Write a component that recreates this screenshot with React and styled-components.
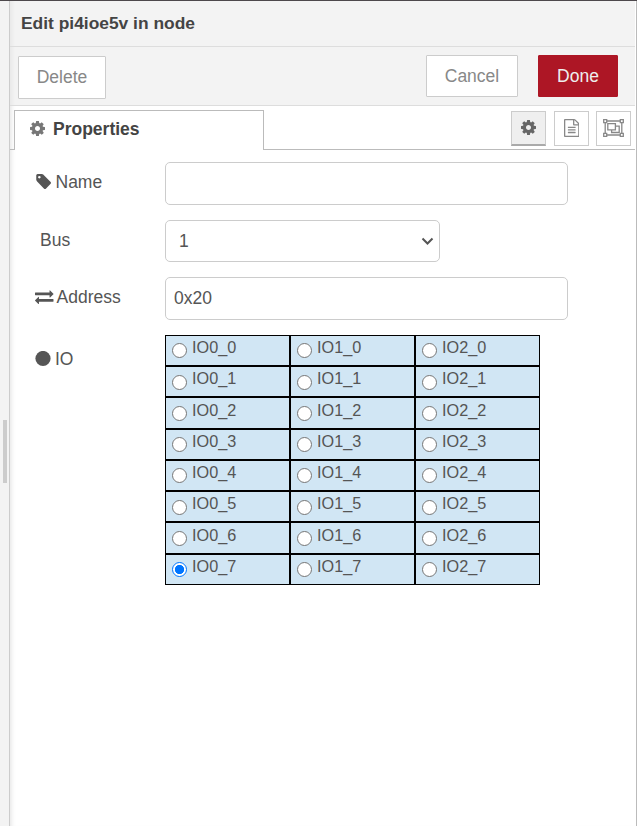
import React, { useState } from "react";
import styled, { createGlobalStyle } from "styled-components";

const GlobalStyle = createGlobalStyle`
  * { box-sizing: border-box; }
  body {
    margin: 0;
    background: #fff;
    color: #555;
    font-family: "Liberation Sans", Arial, sans-serif;
    font-size: 17.5px;
    overflow: hidden;
  }
`;

const Page = styled.div`
  display: flex;
  width: 637px;
  height: 826px;
  border-top: 1px solid #4d484c;
`;

const Gutter = styled.div`
  flex: 0 0 9px;
  padding: 419px 0 0 3px;
  background: #f3f3f3;
`;

const Grip = styled.div`
  width: 4px;
  height: 63px;
  background: #ccc;
`;

const Tray = styled.section`
  flex: 1;
  display: flex;
  flex-direction: column;
  border-left: 1px solid #ccc;
  border-right: 1px solid #bbb;
  padding-right: 1px;
  background: #fff;
  box-shadow: inset 5px 0 5px -4px rgba(0, 0, 0, 0.12);
`;

const Header = styled.header`
  height: 46px;
  padding: 0 11px;
  line-height: 45px;
  font-weight: bold;
  font-size: 17.4px;
  color: #444;
  background: linear-gradient(90deg, #e9e9e9, #f3f3f3 5px);
  border-bottom: 1px solid #ddd;
`;

const Toolbar = styled.div`
  display: flex;
  align-items: flex-start;
  height: 59px;
  padding: 8px 17px 0 8px;
  background: linear-gradient(90deg, #e9e9e9, #f3f3f3 5px);
  border-bottom: 1px solid #ddd;
`;

const Button = styled.button`
  width: ${(p) => p.$width}px;
  height: ${(p) => p.$height || 42}px;
  padding: 0;
  font: inherit;
  line-height: 40px;
  border-radius: 1px;
  color: ${(p) => (p.$primary ? "#eee" : "#888")};
  background: ${(p) => (p.$primary ? "#ad1625" : "#fff")};
  border: 1px solid ${(p) => (p.$primary ? "#ad1625" : "#ccc")};
`;

const DeleteButton = styled(Button)`
  margin: 1px auto 0 0;
  padding-bottom: 2px;
`;

const DoneButton = styled(Button)`
  margin-left: 20px;
`;

const TabBar = styled.div`
  display: flex;
  height: 44px;
  padding: 4px 4px 0 4px;
  background: linear-gradient(#bbb, #bbb) bottom / 100% 1px no-repeat;
`;

const Tab = styled.div`
  display: flex;
  width: 250px;
  height: 40px;
  padding-left: 15px;
  line-height: 36px;
  font-weight: bold;
  color: #444;
  background: #fff;
  border: 1px solid #bbb;
  border-bottom: 0;

  svg {
    margin: 10px 8px 0 0;
    color: #777;
  }
`;

const TabTools = styled.div`
  display: flex;
  gap: 7px;
  margin: 1px 0 0 auto;
`;

const ToolButton = styled.button`
  display: flex;
  align-items: flex-start;
  justify-content: center;
  width: 35px;
  height: 35px;
  padding: ${(p) => (p.$selected ? 8 : 7)}px 0 0;
  margin-right: ${(p) => (p.$selected ? 1 : 0)}px;
  color: ${(p) => (p.$selected ? "#666" : "#888")};
  background: ${(p) => (p.$selected ? "#efefef" : "#fff")};
  border: 1px solid #ccc;
  ${(p) => p.$selected && "border-bottom: 2px solid #aaa;"}
`;

const Form = styled.form`
  display: flex;
  flex-direction: column;
  padding: 12px 0 0 25px;
`;

const Row = styled.div`
  display: flex;
  align-items: flex-start;
  margin-bottom: 15px;
`;

const Label = styled.label`
  display: flex;
  width: 130px;
  padding: ${(p) => p.$top}px 0 0 ${(p) => p.$indent || 0}px;
  line-height: 20px;

  svg {
    flex: none;
    margin-top: 2px;
    margin-right: ${(p) => p.$gap}px;
  }
`;

const TextInput = styled.input`
  width: 403px;
  height: 43px;
  padding: 0 8px;
  font: inherit;
  color: #555;
  background: #fff;
  border: 1px solid #ccc;
  border-radius: 5px;
  outline: 0;
`;

const Select = styled.div`
  display: flex;
  justify-content: space-between;
  width: 275px;
  height: 42px;
  padding: 0 5px 0 13px;
  line-height: 40px;
  color: #555;
  border: 1px solid #ccc;
  border-radius: 5px;

  svg { margin-top: 15px; }
`;

const PinGrid = styled.div`
  display: grid;
  grid-template-columns: repeat(3, 125px);
  grid-template-rows: 31px 31px 32px 31px 31px 31px 32px 31px;
`;

const Pin = styled.label`
  display: flex;
  padding-left: 6px;
  border: 1px solid #000;
  background: #d1e6f4;
  font-size: 16.25px;
  line-height: 20px;
  color: #555;
`;

const Radio = styled.input`
  appearance: none;
  flex: none;
  width: 15px;
  height: 15px;
  margin: ${(p) => p.$top}px 5px 0 0;
  border: 1px solid #767676;
  border-radius: 50%;
  background: #fff;

  &:checked {
    border-color: #0075ff;
    background: radial-gradient(circle, #0075ff 4.3px, #fff 5px);
  }
`;

const PinName = styled.span`
  padding-top: ${(p) => p.$top}px;
`;

const PATHS = {
  cog: "M1152 896q0-106-75-181t-181-75-181 75-75 181 75 181 181 75 181-75 75-181zm512-109v222q0 12-8 23t-20 13l-185 28q-19 54-39 91 35 50 107 138 10 12 10 25t-9 23q-27 37-99 108t-94 71q-12 0-26-9l-138-108q-44 23-91 38-16 136-29 186-7 28-36 28h-222q-14 0-24.5-8.5t-11.5-21.5l-28-184q-49-16-90-37l-141 107q-10 9-25 9-14 0-25-11-126-114-165-168-7-10-7-23 0-12 8-23 15-21 51-66.5t54-70.5q-27-50-41-99l-183-27q-13-2-21-12.5t-8-23.5v-222q0-12 8-23t19-13l186-28q14-46 39-92-40-57-107-138-10-12-10-24 0-10 9-23 26-36 98.5-107.5t94.5-71.5q13 0 26 10l138 107q44-23 91-38 16-136 29-186 7-28 36-28h222q14 0 24.5 8.5t11.5 21.5l28 184q49 16 90 37l142-107q9-9 24-9 13 0 25 10 129 119 165 170 7 8 7 22 0 12-8 23-15 21-51 66.5t-54 70.5q26 50 41 98l183 28q13 2 21 12.5t8 23.5z",
  tag: "M576 448q0-53-37.5-90.5t-90.5-37.5-90.5 37.5-37.5 90.5 37.5 90.5 90.5 37.5 90.5-37.5 37.5-90.5zm1067 576q0 53-37 90l-491 492q-39 37-91 37-53 0-90-37l-715-716q-38-37-64.5-101t-26.5-117v-416q0-52 38-90t90-38h416q53 0 117 26.5t102 64.5l715 714q37 39 37 91z",
  exchange: "M1792 1184v192q0 13-9.5 22.5t-22.5 9.5h-1376v192q0 13-9.5 22.5t-22.5 9.5q-12 0-24-10l-319-320q-9-9-9-22 0-14 9-23l320-320q9-9 23-9 13 0 22.5 9.5t9.5 22.5v192h1376q13 0 22.5 9.5t9.5 22.5zm0-544q0 14-9 23l-320 320q-9 9-23 9-13 0-22.5-9.5t-9.5-22.5v-192h-1376q-13 0-22.5-9.5t-9.5-22.5v-192q0-13 9.5-22.5t22.5-9.5h1376v-192q0-14 9-23t23-9q12 0 24 10l319 319q9 9 9 23z",
  file: "M1596 380q28 28 48 76t20 88v1152q0 40-28 68t-68 28h-1344q-40 0-68-28t-28-68v-1600q0-40 28-68t68-28h896q40 0 88 20t76 48zm-444-244v376h376q-10-29-22-41l-313-313q-12-12-41-22zm384 1528v-1024h-416q-40 0-68-28t-28-68v-416h-768v1536h1280zm-1024-864q0-14 9-23t23-9h704q14 0 23 9t9 23v64q0 14-9 23t-23 9h-704q-14 0-23-9t-9-23v-64zm736 224q14 0 23 9t9 23v64q0 14-9 23t-23 9h-704q-14 0-23-9t-9-23v-64q0-14 9-23t23-9h704zm0 256q14 0 23 9t9 23v64q0 14-9 23t-23 9h-704q-14 0-23-9t-9-23v-64q0-14 9-23t23-9h704z",
};

const Icon = ({ name, width, height, viewBox }) => (
  <svg width={width} height={height} viewBox={viewBox} fill="currentColor" preserveAspectRatio="none">
    <path d={PATHS[name]} />
  </svg>
);

const CogIcon = () => <Icon name="cog" width={15} height={15} viewBox="128 128 1536 1536" />;

const GroupIcon = () => (
  <svg width="21" height="18" viewBox="0 0 21 18" fill="none" stroke="currentColor" strokeWidth="1.3">
    <path d="M4 2h13M4 16h13M2.2 4v10M18.8 4v10" />
    <path d="M.7.7h3v3h-3zM17.3.7h3v3h-3zM.7 14.3h3v3h-3zM17.3 14.3h3v3h-3z" />
    <path d="M4.8 4.7h7.6v6.2H4.8z" />
    <path d="M12.4 7.2h3.8v6.3H8.6v-2.6" />
  </svg>
);

// Vertical offsets of the radio and its caption inside each table row.
const PIN_ROWS = [
  { radio: 7, text: 1 },
  { radio: 8, text: 1 },
  { radio: 8, text: 2 },
  { radio: 7, text: 1 },
  { radio: 7, text: 1 },
  { radio: 8, text: 1 },
  { radio: 8, text: 2 },
  { radio: 7, text: 1 },
];
const PORTS = [0, 1, 2];

export default function App() {
  const [name, setName] = useState("");
  const [address, setAddress] = useState("0x20");
  const [pin, setPin] = useState("IO0_7");

  return (
    <>
      <GlobalStyle />
      <Page>
        <Gutter>
          <Grip />
        </Gutter>
        <Tray>
          <Header>Edit pi4ioe5v in node</Header>
          <Toolbar>
            <DeleteButton $width={88} $height={43}>Delete</DeleteButton>
            <Button $width={92}>Cancel</Button>
            <DoneButton $width={80} $primary>Done</DoneButton>
          </Toolbar>
          <TabBar>
            <Tab>
              <CogIcon />
              Properties
            </Tab>
            <TabTools>
              <ToolButton $selected aria-label="Properties">
                <CogIcon />
              </ToolButton>
              <ToolButton aria-label="Description">
                <Icon name="file" width={15.5} height={18} viewBox="128 0 1536 1792" />
              </ToolButton>
              <ToolButton aria-label="Appearance">
                <GroupIcon />
              </ToolButton>
            </TabTools>
          </TabBar>
          <Form>
            <Row>
              <Label $top={10} $gap={4.5}>
                <Icon name="tag" width={16} height={15} viewBox="0 128 1643 1515" />
                Name
              </Label>
              <TextInput value={name} onChange={(e) => setName(e.target.value)} />
            </Row>
            <Row>
              <Label $top={10} $indent={5}>Bus</Label>
              <Select>
                1
                <svg width="13" height="10" viewBox="0 0 13 10" fill="none" stroke="#555" strokeWidth="2">
                  <path d="M1.5 2.5l5 5 5-5" />
                </svg>
              </Select>
            </Row>
            <Row>
              <Label $top={10} $gap={3}>
                <Icon name="exchange" width={18.5} height={15} viewBox="0 160 1792 1472" />
                Address
              </Label>
              <TextInput value={address} onChange={(e) => setAddress(e.target.value)} />
            </Row>
            <Row>
              <Label $top={14} $gap={4}>
                <svg width="16" height="16" viewBox="0 0 16 16" fill="currentColor">
                  <circle cx="8" cy="7.5" r="7.6" />
                </svg>
                IO
              </Label>
              <PinGrid>
                {PIN_ROWS.map((offset, row) =>
                  PORTS.map((port) => {
                    const id = `IO${port}_${row}`;
                    return (
                      <Pin key={id}>
                        <Radio
                          type="radio"
                          name="pin"
                          $top={offset.radio}
                          checked={pin === id}
                          onChange={() => setPin(id)}
                        />
                        <PinName $top={offset.text}>{id}</PinName>
                      </Pin>
                    );
                  })
                )}
              </PinGrid>
            </Row>
          </Form>
        </Tray>
      </Page>
    </>
  );
}
